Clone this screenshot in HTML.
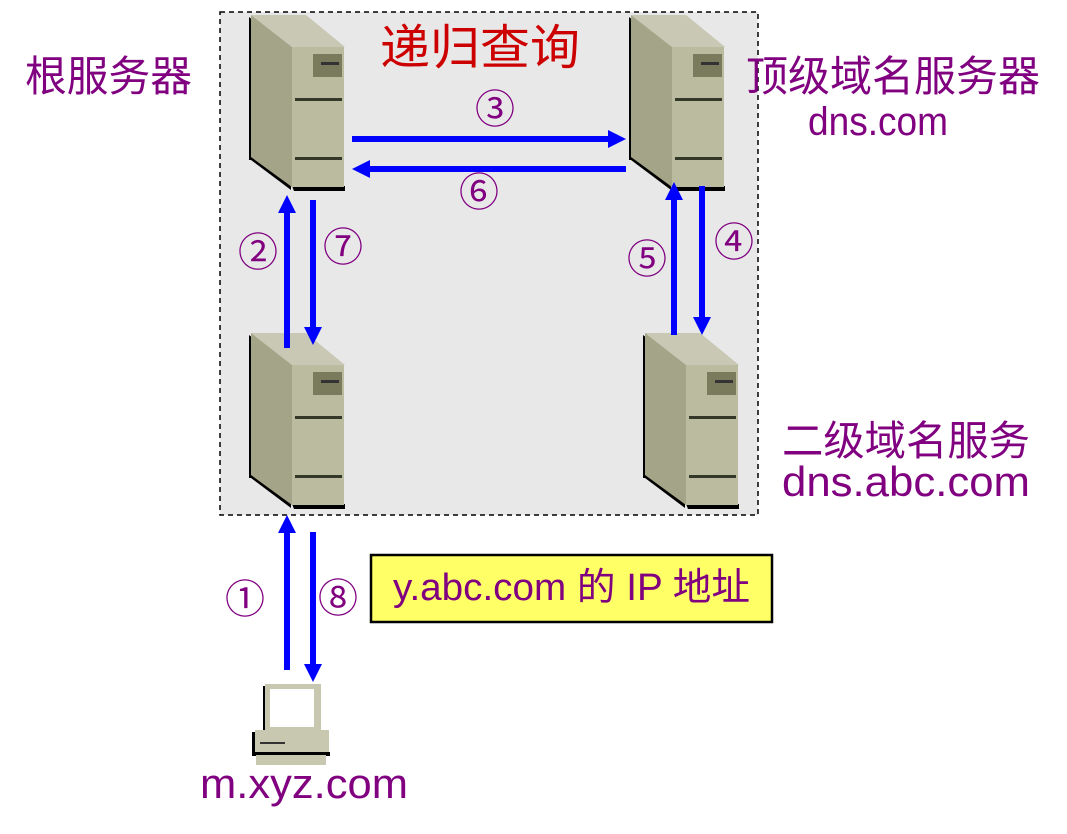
<!DOCTYPE html>
<html><head><meta charset="utf-8"><style>
html,body{margin:0;padding:0;background:#fff;width:1067px;height:834px;overflow:hidden}
svg text{font-family:"Liberation Sans","Noto Sans CJK SC",sans-serif;fill:#800080}
</style></head><body>
<svg width="1067" height="834" viewBox="0 0 1067 834" xmlns="http://www.w3.org/2000/svg">
<defs>
<g id="srv">
 <polygon points="1,3 43,35 43,176 3,146 1,146" fill="#000"/>
 <polygon points="44,172 97,172 97,177 46,177" fill="#000"/>
 <polygon points="3,1 58,1 97,33 44,33" fill="#c8c8b4"/>
 <polygon points="3,1 44,33 44,173 3,143" fill="#a4a488"/>
 <rect x="44" y="33" width="52" height="140" fill="#bbbba0"/>
 <rect x="65" y="40" width="29" height="23" fill="#7a7a5c"/>
 <rect x="73" y="48" width="18" height="3" fill="#333"/>
 <rect x="47" y="84" width="47" height="3" fill="#333828"/>
 <rect x="47" y="143" width="47" height="3" fill="#333828"/>
</g>
<marker id="a" markerWidth="3" markerHeight="3" refX="0" refY="1.5" orient="auto" markerUnits="strokeWidth"><polygon points="0,0 3,1.5 0,3" fill="#0000ff"/></marker>
</defs>
<rect x="220" y="12" width="538" height="503" fill="#e8e8e8" stroke="#000" stroke-width="1.5" stroke-dasharray="5,4"/>
<use href="#srv" x="248" y="14"/>
<use href="#srv" x="628" y="14"/>
<use href="#srv" x="248" y="332"/>
<use href="#srv" x="642" y="332"/>
<g stroke="#0000ff" stroke-width="6" fill="none" marker-end="url(#a)">
 <line x1="352" y1="139" x2="608" y2="139"/>
 <line x1="626" y1="169" x2="370" y2="169"/>
 <line x1="287" y1="348" x2="287" y2="213"/>
 <line x1="313" y1="200" x2="313" y2="327"/>
 <line x1="674" y1="335" x2="674" y2="200"/>
 <line x1="702" y1="186" x2="702" y2="317"/>
 <line x1="287" y1="670" x2="287" y2="533"/>
 <line x1="313" y1="532" x2="313" y2="664"/>
</g>
<g>
 <rect x="263" y="686" width="58" height="47" fill="#000" />
 <rect x="265" y="684" width="56" height="48" fill="#c8c8b0"/>
 <rect x="270" y="689" width="44" height="38" fill="#fff"/>
 <rect x="252" y="732" width="4" height="20" fill="#000"/>
 <rect x="255" y="730" width="74" height="22" fill="#c8c8b0"/>
 <rect x="260" y="742" width="25" height="2" fill="#333"/>
 <rect x="252" y="752" width="78" height="4" fill="#000"/>
 <rect x="256" y="755" width="70" height="10" fill="#c8c8b0"/>
</g>
<rect x="371" y="555" width="401" height="67" fill="#ffff66" stroke="#000" stroke-width="2.5"/>
<text x="393" y="600" font-size="38" textLength="357" lengthAdjust="spacingAndGlyphs">y.abc.com 的 IP 地址</text>
<text x="380" y="64" font-size="48" style="fill:#cc0000" textLength="200" lengthAdjust="spacingAndGlyphs">递归查询</text>
<text x="25" y="91" font-size="42" textLength="167" lengthAdjust="spacingAndGlyphs">根服务器</text>
<text x="746" y="91" font-size="42" textLength="294" lengthAdjust="spacingAndGlyphs">顶级域名服务器</text>
<text x="808" y="135" font-size="40" textLength="140" lengthAdjust="spacingAndGlyphs">dns.com</text>
<text x="782" y="455" font-size="41" textLength="248" lengthAdjust="spacingAndGlyphs">二级域名服务</text>
<text x="782" y="496" font-size="42" textLength="248" lengthAdjust="spacingAndGlyphs">dns.abc.com</text>
<text x="200" y="798" font-size="42" textLength="208" lengthAdjust="spacingAndGlyphs">m.xyz.com</text>
<g font-size="40">
<text x="475" y="123">③</text>
<text x="459" y="206">⑥</text>
<text x="238" y="266">②</text>
<text x="323" y="261">⑦</text>
<text x="627" y="273">⑤</text>
<text x="714" y="256">④</text>
<text x="225" y="613">①</text>
<text x="318" y="612">⑧</text>
</g>
</svg>
</body></html>
